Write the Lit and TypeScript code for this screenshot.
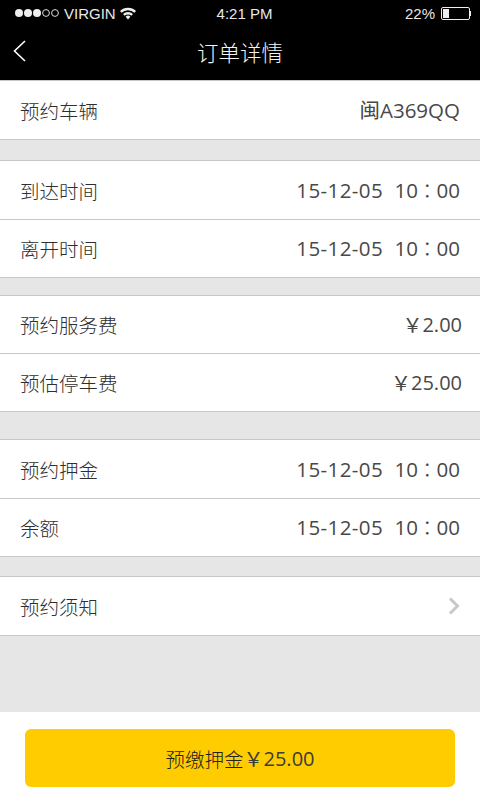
import { LitElement, html, css } from "lit";
import { customElement } from "lit/decorators.js";

type Row = { label: string; date?: string; time?: string; value?: string; short?: boolean; arrow?: boolean; money?: string };
type Section = { gap: string; rows: Row[] };

const SECTIONS: Section[] = [
  { gap: "g0", rows: [{ label: "预约车辆", value: "闽A369QQ" }] },
  { gap: "g20", rows: [{ label: "到达时间", date: "15-12-05", time: "10：00" }, { label: "离开时间", date: "15-12-05", time: "10：00", short: true }] },
  { gap: "g17", rows: [{ label: "预约服务费", money: "2.00", short: true }, { label: "预估停车费", money: "25.00", short: true }] },
  { gap: "g27", rows: [{ label: "预约押金", date: "15-12-05", time: "10：00" }, { label: "余额", date: "15-12-05", time: "10：00", short: true }] },
  { gap: "g19", rows: [{ label: "预约须知", arrow: true }] },
];

@customElement("app-root")
export class AppRoot extends LitElement {
  static styles = css`
    :host {
      display: flex;
      flex-direction: column;
      width: 480px;
      height: 800px;
      overflow: hidden;
      background: #e6e6e6;
      font-family: "Open Sans", "Noto Sans CJK SC", sans-serif;
      color: #484848;
    }
    .top { background: #000; color: #fff; height: 80px; flex: none; }
    .status {
      height: 26px;
      display: grid;
      grid-template-columns: 1fr auto 1fr;
      align-items: center;
      font: 15px "Liberation Sans", sans-serif;
      color: #e8e8e8;
    }
    .status .left { display: flex; align-items: center; padding-left: 14px; gap: 4px; }
    .status .time { padding-left: 9px; }
    .status .right { display: flex; align-items: center; justify-content: flex-end; padding-right: 9px; gap: 6px; }
    .dots { display: block; }
    .nav { height: 54px; display: flex; align-items: center; justify-content: center; position: relative; }
    .nav .back { position: absolute; left: 13px; top: 14px; }
    .nav .title { font: 300 21.5px "Noto Sans CJK SC", sans-serif; margin-bottom: 3px; color: #f4f4f4; }
    .section { background: #fff; border-top: 1px solid #c8c8c8; border-bottom: 1px solid #c8c8c8; flex: none; }
    .g20 { margin-top: 20px; }
    .g17 { margin-top: 17px; }
    .g27 { margin-top: 27px; }
    .g19 { margin-top: 19px; }
    .row {
      height: 58px;
      display: flex;
      align-items: center;
      justify-content: space-between;
      padding: 0 20px;
      font-size: 20.5px;
      box-sizing: border-box;
    }
    .row.short { height: 57px; }
    .row + .row { border-top: 1px solid #c8c8c8; height: 58px; }
    .label { font: 300 19.5px "Noto Sans CJK SC", sans-serif; color: #2e2e2e; }
    .value { display: flex; align-items: center; line-height: 1; white-space: pre; }
    .date { letter-spacing: 0.4px; margin-right: 11.5px; }
    .colon { font-family: "Noto Sans CJK TC", sans-serif; font-weight: 300; margin: 0 -1px; }
    .money { font-size: 20px; margin-right: -2px; }
    .yen { font-family: "Noto Sans CJK SC", sans-serif; font-weight: 400; font-size: 20px; }
    .chev { display: block; }
    .spacer { flex: 1; }
    .footer { background: #fff; height: 88px; flex: none; padding: 17px 25px 13px; box-sizing: border-box; display: flex; }
    .btn {
      flex: 1;
      background: #ffcc00;
      border-radius: 6px;
      display: flex;
      align-items: center;
      justify-content: center;
      font-size: 20px;
      color: #3c3c3c;
    }
    .btn .cjk { font: 300 19.5px "Noto Sans CJK SC", sans-serif; color: #222; }
  `;

  private renderValue(r: Row) {
    if (r.arrow) {
      return html`<svg class="chev" width="12" height="18" viewBox="0 0 12 18">
        <path d="M2 1.5 L9.5 9 L2 16.5" fill="none" stroke="#c8c8c8" stroke-width="3" />
      </svg>`;
    }
    if (r.date) {
      const [h, m] = (r.time ?? "").split("：");
      return html`<span class="value"><span class="date">${r.date}</span><span>${h}</span><span class="colon">：</span><span>${m}</span></span>`;
    }
    if (r.money) {
      return html`<span class="value money"><span class="yen">￥</span><span>${r.money}</span></span>`;
    }
    return html`<span class="value">${r.value}</span>`;
  }

  render() {
    return html`
      <div class="top">
        <div class="status">
          <div class="left">
            <svg class="dots" width="46" height="10" viewBox="0 0 46 10">
              <circle cx="5" cy="5" r="4" fill="#eee" />
              <circle cx="14" cy="5" r="4" fill="#eee" />
              <circle cx="23" cy="5" r="4" fill="#eee" />
              <circle cx="32" cy="5" r="3.4" fill="none" stroke="#ddd" />
              <circle cx="41" cy="5" r="3.4" fill="none" stroke="#ddd" />
            </svg>
            <span>VIRGIN</span>
            <svg width="16" height="13" viewBox="0 0 16 13">
              <path d="M0 4 A11.5 11.5 0 0 1 16 4 L14.4 5.8 A9 9 0 0 0 1.6 5.8Z" fill="#eee" />
              <path d="M3 7 A7 7 0 0 1 13 7 L11.4 8.8 A4.8 4.8 0 0 0 4.6 8.8Z" fill="#eee" />
              <path d="M5.6 9.8 A3.4 3.4 0 0 1 10.4 9.8 L8 12.6Z" fill="#eee" />
            </svg>
          </div>
          <div class="time">4:21 PM</div>
          <div class="right">
            <span>22%</span>
            <svg width="30" height="13" viewBox="0 0 30 13">
              <rect x="0.5" y="0.5" width="28" height="12" rx="1.5" fill="none" stroke="#eee" />
              <rect x="2" y="2" width="6" height="9" fill="#eee" />
              <rect x="29" y="4" width="1" height="5" fill="#eee" />
            </svg>
          </div>
        </div>
        <div class="nav">
          <svg class="back" width="14" height="22" viewBox="0 0 14 22">
            <path d="M12 1 L1.5 11 L12 21" fill="none" stroke="#fff" stroke-width="1.6" />
          </svg>
          <span class="title">订单详情</span>
        </div>
      </div>
      ${SECTIONS.map(
        (s) => html`
          <div class="section ${s.gap}">
            ${s.rows.map(
              (r) => html`
                <div class="row ${r.short ? "short" : ""}">
                  <span class="label">${r.label}</span>
                  ${this.renderValue(r)}
                </div>
              `
            )}
          </div>
        `
      )}
      <div class="spacer"></div>
      <div class="footer">
        <div class="btn"><span class="cjk">预缴押金</span><span class="yen">￥</span><span>25.00</span></div>
      </div>
    `;
  }
}
